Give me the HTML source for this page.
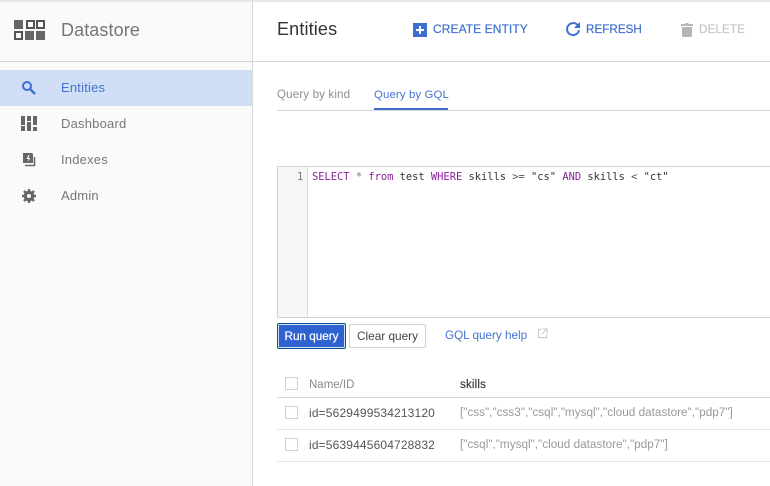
<!DOCTYPE html>
<html><head><meta charset="utf-8">
<style>
html,body{margin:0;padding:0;background:#fff}
#p{position:relative;width:770px;height:486px;overflow:hidden;background:#fff;font-family:"Liberation Sans",sans-serif}
.a{position:absolute;white-space:nowrap}
.l{position:absolute;background:#d6d6d6}
svg{position:absolute;display:block}
.nav{left:61px;font-size:13px;line-height:16px;color:#777;letter-spacing:.2px}
.btn{font-size:12px;line-height:16px;font-weight:400;-webkit-text-stroke:.2px currentColor;color:#3d6fd0}
.cb{position:absolute;left:285px;width:11px;height:11px;border:1px solid #d0d0d0;background:#fff}
.mono{font-family:"DejaVu Sans Mono","Liberation Mono",monospace;font-size:10.4px;line-height:14px;top:169px}
.box{width:5px;height:5px;border:2px solid #555}
.fill{width:9px;height:9px;background:#666}
</style></head><body><div id="p">
<div class="a" style="left:0;top:0;width:252px;height:486px;background:#fafafa"></div>
<div class="l" style="left:0;top:0;width:770px;height:2px;background:#e8e8e8"></div>
<div class="l" style="left:252px;top:0;width:1px;height:486px;background:#d8d8d8"></div>
<div class="l" style="left:0;top:61px;width:770px;height:1px"></div>

<div class="a fill" style="left:14px;top:20px"></div>
<div class="a box" style="left:26px;top:20px"></div>
<div class="a box" style="left:36px;top:20px"></div>
<div class="a box" style="left:14px;top:31px"></div>
<div class="a fill" style="left:25px;top:31px"></div>
<div class="a fill" style="left:36px;top:31px"></div>
<div class="a" style="left:61px;top:19px;font-size:18px;line-height:22px;color:#757575;letter-spacing:.1px">Datastore</div>

<div class="a" style="left:0;top:70px;width:252px;height:36px;background:#d0dff6"></div>
<svg style="left:21px;top:80px" width="16" height="16" viewBox="0 0 16 16"><circle cx="6" cy="6" r="4" fill="none" stroke="#3d6fd0" stroke-width="2"/><path d="M9 9l5 5" stroke="#3d6fd0" stroke-width="2.4" fill="none"/></svg>
<div class="a nav" style="top:80px;color:#4472cf">Entities</div>
<svg style="left:21px;top:116px" width="16" height="16" viewBox="0 0 16 16" fill="#666"><path d="M0 0h4v9H0zM0 10h4v5H0zM6 0h4v5H6zM6 6h4v9H6zM12 0h4v9h-4zM12 11h4v4h-4z"/></svg>
<div class="a nav" style="top:116px">Dashboard</div>
<svg style="left:22px;top:152px" width="14" height="16" viewBox="0 0 14 16"><path d="M1 1h9l1 1v9H1z" fill="#666"/><path d="M6.500 3L4.500 7h2l-1 3 3-4h-2l1-3z" fill="#fafafa"/><path d="M12.500 5v8.500H3" fill="none" stroke="#666" stroke-width="1.500"/></svg>
<div class="a nav" style="top:152px">Indexes</div>
<svg style="left:22px;top:189px" width="14" height="14" viewBox="0 0 14 14"><circle cx="7" cy="7" r="3.800" fill="none" stroke="#666" stroke-width="3"/><path d="M7 0v14M0 7h14M2 2l10 10M12 2L2 12" stroke="#666" stroke-width="2.400"/><circle cx="7" cy="7" r="2" fill="#fafafa"/></svg>
<div class="a nav" style="top:188px">Admin</div>

<div class="a" style="left:277px;top:18px;font-size:18px;line-height:22px;color:#333;letter-spacing:.15px">Entities</div>
<div class="a" style="left:413px;top:23px;width:14px;height:14px;background:#3d6fd0"></div>
<div class="a" style="left:416px;top:29px;width:8px;height:2px;background:#fff"></div>
<div class="a" style="left:419px;top:26px;width:2px;height:8px;background:#fff"></div>
<div class="a btn" style="left:433px;top:21px;letter-spacing:.08px">CREATE ENTITY</div>
<svg style="left:565px;top:21px" width="16" height="16" viewBox="0 0 16 16"><path d="M12.500 4A6 6 0 1 0 14 9" fill="none" stroke="#3d6fd0" stroke-width="2"/><path d="M15 1v6H9z" fill="#3d6fd0"/></svg>
<div class="a btn" style="left:586px;top:22px;font-size:11.7px">REFRESH</div>
<svg style="left:680px;top:22px" width="14" height="15" viewBox="0 0 14 15" fill="#b5b5b5"><path d="M1 2h4l1-1h2l1 1h4v2H1zM2 5h10v9l-1 1H3l-1-1z"/></svg>
<div class="a btn" style="left:699px;top:21px;color:#c8c8c8;font-size:11.8px">DELETE</div>

<div class="a" style="left:277px;top:87px;font-size:11.6px;line-height:16px;color:#8f8f8f;letter-spacing:.13px">Query by kind</div>
<div class="a" style="left:374px;top:87px;font-size:11.4px;line-height:16px;color:#4472cf;letter-spacing:.13px">Query by GQL</div>
<div class="l" style="left:277px;top:110px;width:493px;height:1px"></div>
<div class="a" style="left:374px;top:108px;width:74px;height:2px;background:#3d6fd0"></div>

<div class="a" style="left:277px;top:166px;width:493px;height:150px;border:1px solid #d2d2d2;border-right:0"></div>
<div class="a" style="left:278px;top:167px;width:29px;height:150px;background:#f6f6f6;border-right:1px solid #ddd"></div>
<div class="a mono" style="left:297px;top:170px;color:#777">1</div>
<div class="a mono" style="left:312px;top:170px;color:#333"><span style="color:#8a1f9a">SELECT</span> <span style="color:#777">*</span> <span style="color:#8a1f9a">from</span> test <span style="color:#8a1f9a">WHERE</span> skills <span style="color:#555">&gt;=</span> "cs" <span style="color:#8a1f9a">AND</span> skills <span style="color:#555">&lt;</span> "ct"</div>

<div class="a" style="left:277px;top:323px;width:69px;height:26px;box-sizing:border-box;background:#2e62d0;border:1px solid #0f4f9e;box-shadow:inset 0 0 0 1px #cfe0f5;border-radius:2px;color:#fff;font-size:11.7px;line-height:26px;text-align:center;-webkit-text-stroke:.2px #fff">Run query</div>
<div class="a" style="left:349px;top:324px;width:77px;height:24px;box-sizing:border-box;background:#fff;border:1px solid #d0d0d0;border-radius:2px;color:#444;font-size:11.8px;line-height:22px;text-align:center">Clear query</div>
<div class="a" style="left:445px;top:328px;font-size:11.7px;line-height:16px;color:#4472cf">GQL query help</div>
<svg style="left:537px;top:328px" width="11" height="11" viewBox="0 0 12 12" fill="none" stroke="#c4c4c4"><path d="M5 1.500H1.500v9h9V7M6 1h5v5M11 1L5 7"/></svg>

<div class="cb" style="top:377px"></div>
<div class="a" style="left:309px;top:377px;font-size:11.5px;line-height:16px;color:#8a8a8a">Name/ID</div>
<div class="a" style="left:460px;top:377px;font-size:11.5px;line-height:16px;color:#333;letter-spacing:.2px;-webkit-text-stroke:.15px #333">skills</div>
<div class="l" style="left:277px;top:397px;width:493px;height:1px"></div>
<div class="cb" style="top:406px"></div>
<div class="a" style="left:309px;top:405px;font-size:12px;line-height:16px;color:#555;letter-spacing:.15px">id=5629499534213120</div>
<div class="a" style="left:460px;top:405px;font-size:11.75px;line-height:16px;color:#9a9a9a">["css","css3","csql","mysql","cloud datastore","pdp7"]</div>
<div class="l" style="left:277px;top:429px;width:493px;height:1px;background:#e6e6e6"></div>
<div class="cb" style="top:438px"></div>
<div class="a" style="left:309px;top:437px;font-size:12px;line-height:16px;color:#555;letter-spacing:.15px">id=5639445604728832</div>
<div class="a" style="left:460px;top:437px;font-size:11.75px;line-height:16px;color:#9a9a9a">["csql","mysql","cloud datastore","pdp7"]</div>
<div class="l" style="left:277px;top:461px;width:493px;height:1px;background:#e6e6e6"></div>
</div></body></html>
